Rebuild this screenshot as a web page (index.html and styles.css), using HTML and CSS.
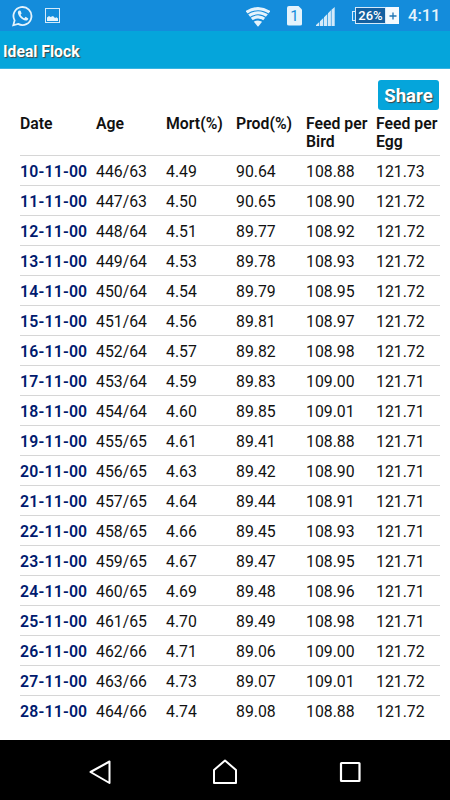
FILE: index.html
```html
<!DOCTYPE html>
<html lang="en">
<head>
<meta charset="UTF-8">
<meta name="viewport" content="width=device-width, initial-scale=1.0">
<title>Ideal Flock</title>
<link rel="stylesheet" href="styles.css">
</head>
<body>
<div class="status-bar">
  <svg class="icon-whatsapp" width="22" height="22" viewBox="0 0 22 22">
    <path d="M1.3 20.3L2.6 15.4A9 9 0 1 1 6.1 18.9Z" fill="none" stroke="#e4f3fc" stroke-width="1.8"/>
    <path d="M7.2 5.6c-.8.3-1.5 1.3-1.3 2.5.6 3.5 3.9 6.9 7.8 7.5 1.3.2 2.6-.9 2.6-2.2l-2.7-1.6-1.3 1.4c-1.6-.6-2.9-1.9-3.7-3.5l1-1.3-1-2.6z" fill="#e4f3fc"/>
  </svg>
  <svg class="icon-picture" width="16" height="16" viewBox="0 0 16 16">
    <rect x=".5" y=".5" width="14" height="14" fill="none" stroke="#d4eafa"/>
    <path d="M2 13V9.500l2-1.500 1.500 1L8 8l2 2 1.500-.8L13 10.500v2.500z" fill="#e4f3fc"/>
  </svg>
  <svg class="icon-wifi" width="24" height="20" viewBox="0 0 24 20">
    <clipPath id="fan"><path d="M0 4.500V0H24V4.500L12 20z"/></clipPath>
    <g clip-path="url(#fan)">
      <g fill="none" stroke="#e4f3fc" stroke-width="3.1">
        <path d="M-1 6.2Q12-3 25 6.2"/>
        <path d="M1 10Q12 1.500 23 10"/>
        <path d="M4 13Q12 6.700 20 13"/>
      </g>
      <path d="M6 16Q12 11 18 16L12 20z" fill="#e4f3fc"/>
    </g>
  </svg>
  <div class="sim">1</div>
  <svg class="icon-signal" width="19" height="19" viewBox="0 0 19 19">
    <path d="M0 19V18L3.300 14.900V19zM4 19V14.200L7.300 10.900V19zM8 19V10.200L11.300 6.900V19zM12 19V6.200L14.900 3.300V19zM15.500 19V2.800L18.700 0V19z" fill="#d4eafa"/>
  </svg>
  <div class="battery">
    <span class="battery-tip"></span>
    <span class="battery-level">26%</span>
    <span class="battery-plus"><svg width="8" height="8" viewBox="0 0 8 8"><path d="M4 .5V7.500M.5 4H7.500" stroke="#1c74b4" stroke-width="1.3"/></svg></span>
  </div>
  <div class="clock">4:11</div>
</div>
<div class="header-bar">Ideal Flock</div>
<div class="container">
  <button class="share" type="button">Share</button>
  <table class="flock">
    <thead>
      <tr>
        <th class="date">Date</th>
        <th class="num">Age</th>
        <th class="num">Mort(%)</th>
        <th class="num">Prod(%)</th>
        <th class="num">Feed per Bird</th>
        <th>Feed per Egg</th>
      </tr>
    </thead>
    <tbody id="flockRows"></tbody>
  </table>
</div>
<div class="nav-bar">
  <svg width="24" height="26" viewBox="0 0 24 26">
    <path d="M2.500 13L21.500 2.500V24z" fill="none" stroke="#fff" stroke-width="2" stroke-linejoin="round"/>
  </svg>
  <svg width="26" height="26" viewBox="0 0 26 26">
    <path d="M1 24V11L12 1.500L23 11V24z" fill="none" stroke="#fff" stroke-width="2" stroke-linejoin="round"/>
  </svg>
  <svg width="22" height="22" viewBox="0 0 22 22">
    <rect x="2" y="2" width="18.500" height="18" rx=".5" fill="none" stroke="#fff" stroke-width="2.2"/>
  </svg>
</div>
<script>
// date, age, mortality, production, feed per bird, feed per egg
const rows = [
  ["10-11-00", "446/63", "4.49", "90.64", "108.88", "121.73"],
  ["11-11-00", "447/63", "4.50", "90.65", "108.90", "121.72"],
  ["12-11-00", "448/64", "4.51", "89.77", "108.92", "121.72"],
  ["13-11-00", "449/64", "4.53", "89.78", "108.93", "121.72"],
  ["14-11-00", "450/64", "4.54", "89.79", "108.95", "121.72"],
  ["15-11-00", "451/64", "4.56", "89.81", "108.97", "121.72"],
  ["16-11-00", "452/64", "4.57", "89.82", "108.98", "121.72"],
  ["17-11-00", "453/64", "4.59", "89.83", "109.00", "121.71"],
  ["18-11-00", "454/64", "4.60", "89.85", "109.01", "121.71"],
  ["19-11-00", "455/65", "4.61", "89.41", "108.88", "121.71"],
  ["20-11-00", "456/65", "4.63", "89.42", "108.90", "121.71"],
  ["21-11-00", "457/65", "4.64", "89.44", "108.91", "121.71"],
  ["22-11-00", "458/65", "4.66", "89.45", "108.93", "121.71"],
  ["23-11-00", "459/65", "4.67", "89.47", "108.95", "121.71"],
  ["24-11-00", "460/65", "4.69", "89.48", "108.96", "121.71"],
  ["25-11-00", "461/65", "4.70", "89.49", "108.98", "121.71"],
  ["26-11-00", "462/66", "4.71", "89.06", "109.00", "121.72"],
  ["27-11-00", "463/66", "4.73", "89.07", "109.01", "121.72"],
  ["28-11-00", "464/66", "4.74", "89.08", "108.88", "121.72"]
];

const tbody = document.getElementById('flockRows');
for (const row of rows) {
  const tr = document.createElement('tr');
  row.forEach((value, i) => {
    const cell = document.createElement(i === 0 ? 'th' : 'td');
    cell.textContent = value;
    tr.appendChild(cell);
  });
  tbody.appendChild(tr);
}
</script>
</body>
</html>
```
FILE: styles.css
```css
body, html {
  height: 100%;
  margin: 0;
  padding: 0;
  overflow: hidden;
}

body {
  display: flex;
  flex-direction: column;
  background-color: #fff;
  color: #111;
  font-family: Roboto, sans-serif;
  font-size: 15.8px;
}

/* android status bar */
.status-bar {
  display: flex;
  align-items: center;
  box-sizing: border-box;
  height: 31px;
  flex-shrink: 0;
  padding: 0 11px 0 12px;
  background-color: #148cdb;
  color: #e4f3fc;
}

.icon-picture {
  margin-left: 11px;
}

.icon-wifi {
  margin: 2px 0 0 auto;
}

.sim {
  width: 15px;
  height: 20px;
  margin-left: 17px;
  background-color: #e4f3fc;
  border-radius: 2px;
  clip-path: polygon(0 0, 11px 0, 15px 4px, 15px 100%, 0 100%);
  color: #148cdb;
  font-size: 15px;
  line-height: 21px;
  text-align: center;
}

.icon-signal {
  margin: 2px 0 0 14px;
}

.battery {
  display: flex;
  align-items: center;
  margin-left: 17px;
}

.battery-tip {
  width: 2px;
  height: 8px;
  border: 1px solid #d4eafa;
  border-right: none;
}

.battery-level {
  box-sizing: border-box;
  width: 31px;
  height: 17px;
  border: 1px solid #d4eafa;
  background-color: #1460a0;
  color: #fff;
  font-size: 13px;
  font-weight: 500;
  line-height: 15px;
  text-align: center;
}

.battery-plus {
  display: flex;
  align-items: center;
  justify-content: center;
  width: 13px;
  height: 17px;
  background-color: #f4fafe;
}

.clock {
  width: 31px;
  margin-left: 9px;
  font-size: 16.5px;
  font-weight: 500;
  white-space: nowrap;
}

.header-bar {
  box-sizing: border-box;
  height: 38px;
  flex-shrink: 0;
  padding-left: 3px;
  border-bottom: 1px solid #38b4e2;
  background-color: #05a5db;
  color: #fff;
  font-size: 15.7px;
  font-weight: bold;
  line-height: 41px;
  text-shadow: 1px 1px 1px #444;
}

.container {
  display: flex;
  flex-direction: column;
  flex: 1;
  padding: 11px 10px 0 20px;
}

.share {
  align-self: flex-end;
  width: 61px;
  height: 30px;
  margin-right: 1px;
  padding: 0;
  border: none;
  border-radius: 3px;
  background-color: #05a5db;
  color: #fff;
  font-family: inherit;
  font-size: 18.6px;
  font-weight: bold;
  line-height: 33px;
  text-shadow: 1px 1px 1px #444;
}

.flock {
  width: 420px;
  border-collapse: separate;
  border-spacing: 0;
  table-layout: fixed;
}

.flock th, .flock td {
  padding: 0;
  text-align: left;
  vertical-align: top;
}

.flock th {
  font-weight: 600;
}

.flock thead th {
  height: 45px;
  padding-top: 5px;
  box-sizing: border-box;
  line-height: 18px;
}

.flock .date {
  width: 76px;
}

.flock .num {
  width: 70px;
}

.flock tbody th, .flock tbody td {
  box-sizing: border-box;
  height: 30px;
  padding-top: 2px;
  border-top: 1px solid #d6d6d6;
  line-height: 27px;
}

.flock tbody th {
  color: #001a6e;
  letter-spacing: .2px;
}

/* android buttons */
.nav-bar {
  display: flex;
  align-items: center;
  justify-content: space-between;
  box-sizing: border-box;
  height: 60px;
  flex-shrink: 0;
  padding: 4px 89px 0 88px;
  background-color: #000;
}
```
